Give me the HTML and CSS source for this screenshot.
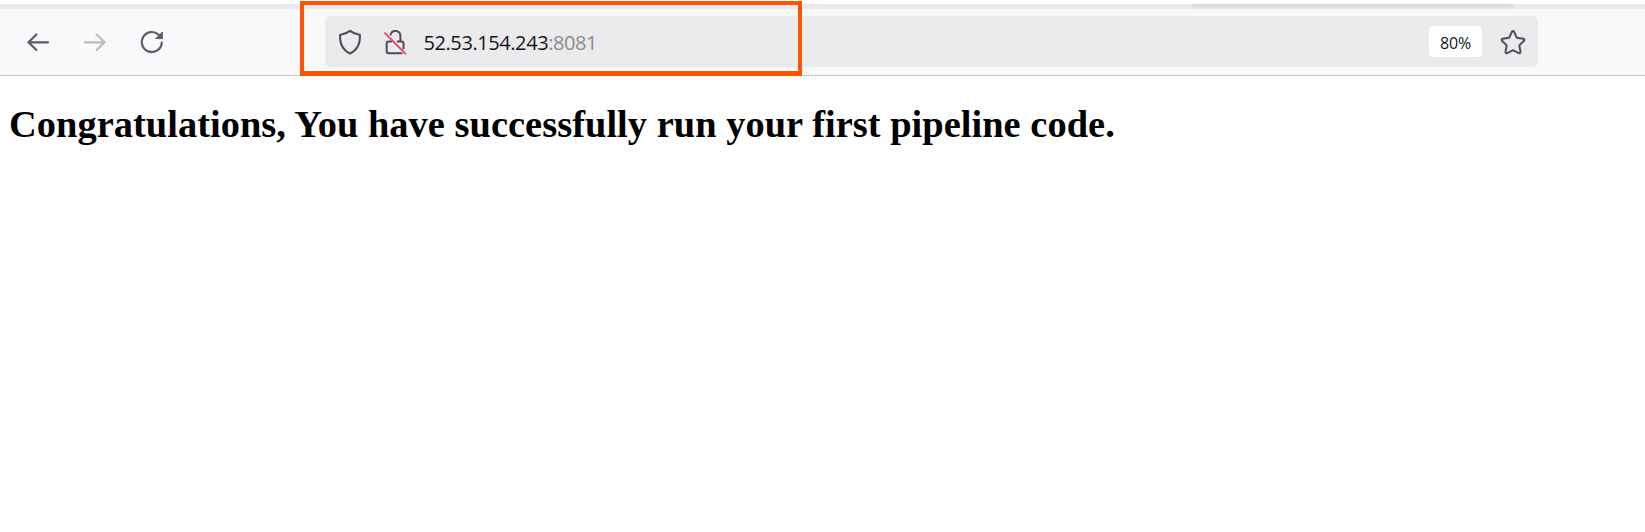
FILE: index.html
```html
<!DOCTYPE html>
<html lang="en">
<head>
<meta charset="utf-8">
<title>52.53.154.243:8081</title>
<link rel="stylesheet" href="styles.css">
</head>
<body>
<div class="tab-strip"><div class="tab-shadow"></div></div>
<header class="toolbar">
  <nav class="nav-buttons">
    <svg class="icon" width="24" height="24" viewBox="0 0 24 24"><path d="M22 12.300H2.500M10.400 4.500L2.400 12.300l8 7.700"/></svg>
    <svg class="icon icon-disabled" width="24" height="24" viewBox="0 0 24 24"><path d="M2 12.300h19.500M13.600 4.500l8 7.800-8 7.700"/></svg>
    <svg class="icon" width="24" height="24" viewBox="0 0 24 24"><path d="M21.800 12.600A10 10 0 1 1 18.500 4.600"/><path class="filled" d="M22.400 2.300v6.300h-6.300z"/></svg>
  </nav>
  <div class="url-bar">
    <svg class="icon shield" width="24" height="26" viewBox="0 0 24 26"><path d="M12 1.900c3 2.300 6.300 3.300 10 4.100.3 8.500-2.300 15-10 18.600C4.300 21 1.700 14.500 2 6c3.700-.8 7-1.800 10-4.100z"/></svg>
    <svg class="icon lock" width="24" height="26" viewBox="0 0 24 26"><path d="M7.600 5.600a5 5 0 0 1 9.800 1.500v5.400M14.800 12.500h3.700a2 2 0 0 1 2 2v5M8.500 12.500H5.700a2 2 0 0 0-2 2v7.800a2 2 0 0 0 2 2h13"/><path class="slash" d="M2 4.200l20.400 20.400"/></svg>
    <div class="url">52.53.154.243<span class="port">:8081</span></div>
    <div class="zoom">80%</div>
    <svg class="icon star" width="26" height="26" viewBox="0 0 26 26"><path d="M11.900 2.800q1.100-1.800 2.200 0l2.800 6 6.400.9q1.900.6.700 2.100l-4.700 4.600 1.200 6.300q0 2-1.800 1.400L13 21.200l-5.700 2.900q-1.800.6-1.800-1.400l1.200-6.300L2 11.800q-1.200-1.500.7-2.100l6.400-.9z"/></svg>
  </div>
  <div class="highlight"></div>
</header>
<main><h1>Congratulations, You have successfully run your first pipeline code.</h1></main>
</body>
</html>
```
FILE: styles.css
```css
* { box-sizing: border-box; }
body { margin: 0; padding-top: 4px; background: #fff; overflow: hidden; }
.tab-strip { height: 5px; background: #eae9ee; overflow: hidden; }
.tab-shadow { width: 322px; height: 4px; margin-left: 1192px; background: linear-gradient(#cfcfd3, #e5e4e9); border-radius: 0 0 8px 8px; filter: blur(1px); }
.toolbar { position: relative; display: flex; height: 67px; padding-top: 7px; background: #f9f9fb; border-bottom: 1px solid #c9c9ce; }
.nav-buttons { display: flex; gap: 33px; width: 325px; padding: 14px 0 0 26px; }
.icon { flex: none; fill: none; stroke: #5b5b66; stroke-width: 2.2; stroke-linecap: round; stroke-linejoin: round; }
.icon-disabled { stroke: #bbbbbf; }
.filled { fill: #5b5b66; stroke-width: 1; }
.url-bar { display: flex; align-items: center; width: 1213px; height: 51px; padding: 0 12px 0 13px; border-radius: 6px; background: #ebebed; font-family: "Open Sans", sans-serif; color: #15141a; }
.shield, .lock, .star { stroke: #4e4e57; stroke-width: 2; }
.lock { margin-left: 21px; }
.slash { stroke: #f23d68; stroke-width: 1.8; }
.url { flex: 1; margin-left: 16.5px; padding-top: 2px; font-size: 20px; line-height: 28px; letter-spacing: -0.42px; }
.port { color: #8a8a8c; }
.zoom { width: 53px; height: 31px; margin-right: 18px; border-radius: 4px; background: #fff; font-size: 16px; line-height: 34px; text-align: center; letter-spacing: -0.2px; }
.highlight { position: absolute; left: 300px; top: -8px; width: 502px; height: 75px; border: 4px solid #ff5500; border-bottom-width: 5px; }
h1 { margin: 25px 0 0 9px; font: bold 38.4px/46px "Liberation Serif", serif; letter-spacing: 0.045px; color: #000; white-space: nowrap; }
```
